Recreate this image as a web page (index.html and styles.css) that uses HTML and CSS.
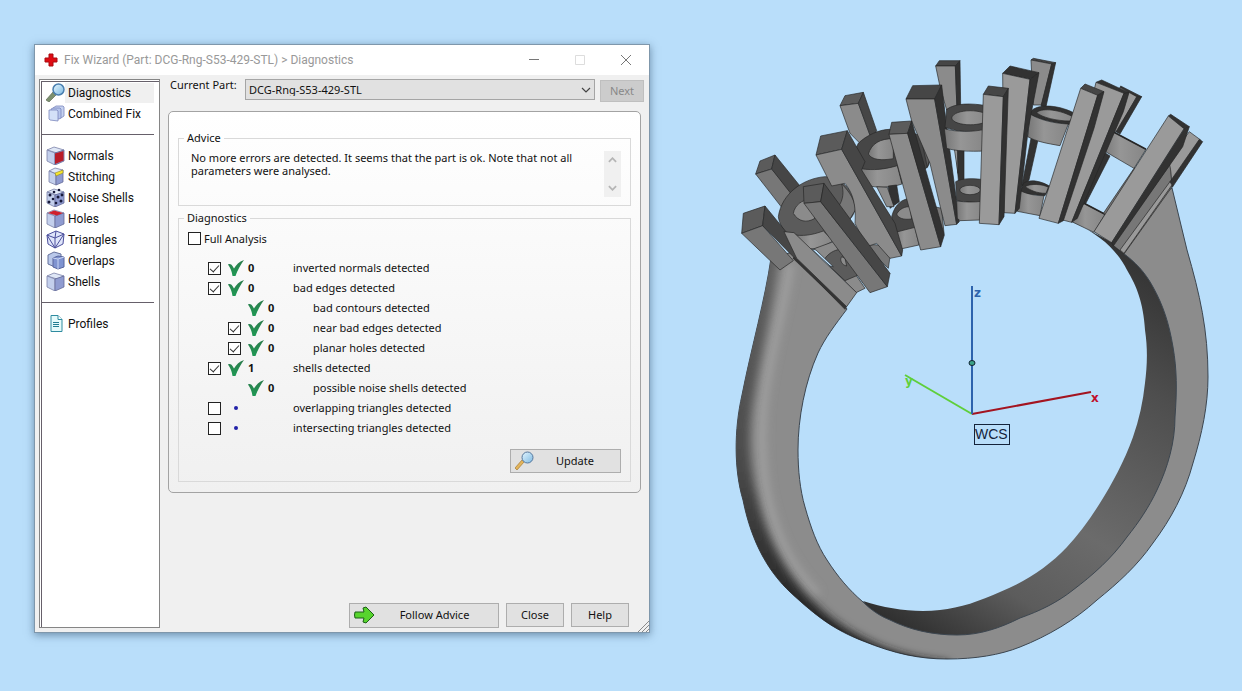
FILE: index.html
```html
<!DOCTYPE html>
<html lang="en">
<head>
<meta charset="utf-8">
<title>Fix Wizard</title>
<link rel="stylesheet" href="styles.css">
</head>
<body>
<svg class="defs" aria-hidden="true">
  <defs>
    <linearGradient id="glass" x1="0" y1="0" x2="1" y2="1"><stop offset="0" stop-color="#e4f6ff"/><stop offset="1" stop-color="#7db9e2"/></linearGradient>
    <linearGradient id="tickG" x1="0" y1="0" x2="0" y2="1"><stop offset="0" stop-color="#2b7a4b"/><stop offset="1" stop-color="#1f9a55"/></linearGradient>
    <symbol id="tick" viewBox="0 0 16 16"><path d="M0 4.500C2 3.500 3.500 4.500 4.500 6L6 8.500C8 5 11 1.500 16 0C12.500 5 9.500 10 7.500 16H4.500C4 12 2.500 8 0 4.500Z" fill="url(#tickG)"/></symbol>
    <symbol id="cube" viewBox="0 0 19 19"><path d="M1 4L8 1L18 4L11 7Z" fill="#dfe7f6" stroke="#7b81a8" stroke-width=".8"/><path d="M1 4L9 7V19L1 15Z" fill="#c3cfec" stroke="#7b81a8" stroke-width=".8"/><path d="M9 7L18 4V15L9 19Z" fill="#8f9bd0" stroke="#656b98" stroke-width=".8"/></symbol>
  </defs>
</svg>
<div class="desktop">
  <section class="window">
    <header class="titlebar">
      <svg class="cross" viewBox="0 0 14 14"><path d="M5 1H9V5H13V9H9V13H5V9H1V5H5Z" fill="#e00b12" stroke="#a90d10"/></svg>
      <h1 class="title">Fix Wizard (Part: DCG-Rng-S53-429-STL) &gt; Diagnostics</h1>
      <div class="caption-buttons">
        <button class="caption" aria-label="Minimize"><svg viewBox="0 0 12 12"><path d="M1 5.500H11" stroke="#777"/></svg></button>
        <button class="caption" aria-label="Maximize" disabled><svg viewBox="0 0 12 12"><path d="M1.500 1.500H10.500V10.500H1.500Z" fill="none" stroke="#ddd"/></svg></button>
        <button class="caption" aria-label="Close window"><svg viewBox="0 0 12 12"><path d="M1 1L11 11M11 1L1 11" stroke="#777"/></svg></button>
      </div>
    </header>
    <div class="window-body">
      <nav class="sidebar">
        <button class="nav-item selected"><svg viewBox="0 0 19 19"><path d="M0 17L7 9L10 12L3 19Z" fill="#7c906f" stroke="#5d6c55" stroke-width=".7"/><circle cx="12.500" cy="6.500" r="5.500" fill="url(#glass)" stroke="#4a7fb0" stroke-width="1.500"/></svg><span>Diagnostics</span></button>
        <button class="nav-item"><svg viewBox="0 0 19 19"><g stroke="#7b87bd" stroke-width=".8"><path d="M7 4L10 2H17L18 3V12L15 14H7Z" fill="#c5d2f0"/><path d="M5 5L7 4H14L15 5V14L13 15H5Z" fill="#b5c5ec"/><path d="M3 6H11L12 7V17L4 16L3 15Z" fill="#d3e1f8"/></g></svg><span>Combined Fix</span></button>
        <hr class="separator">
        <button class="nav-item"><svg viewBox="0 0 19 19"><use href="#cube"/><path d="M9 7.500L17.500 5V14.500L9 18Z" fill="#b91c28"/></svg><span>Normals</span></button>
        <button class="nav-item"><svg viewBox="0 0 19 19"><path d="M3 4L9 1L17 3L11 7Z" fill="#dfe7f6" stroke="#7b81a8" stroke-width=".8"/><path d="M3 4L10 7V18L3 15Z" fill="#c3cfec" stroke="#7b81a8" stroke-width=".8"/><path d="M10 7L17 3V15L10 18Z" fill="#8f9bd0" stroke="#656b98" stroke-width=".8"/><path d="M9 6L17 3V6L10 9Z" fill="#f6e52c" stroke="#8d8430" stroke-width=".6"/></svg><span>Stitching</span></button>
        <button class="nav-item"><svg viewBox="0 0 19 19"><use href="#cube"/><g fill="#17193a"><circle cx="4" cy="7" r="1.500"/><circle cx="7" cy="11" r="1.300"/><circle cx="3" cy="14" r="1.500"/><circle cx="8" cy="4" r="1.300"/><circle cx="13" cy="2" r="1.300"/><circle cx="12" cy="9" r="1.500"/><circle cx="16" cy="7" r="1.400"/><circle cx="15" cy="13" r="1.500"/><circle cx="10" cy="15" r="1.300"/></g></svg><span>Noise Shells</span></button>
        <button class="nav-item"><svg viewBox="0 0 19 19"><use href="#cube"/><path d="M2 4L8 1.500L17 4L11 6.500Z" fill="#d0202c"/></svg><span>Holes</span></button>
        <button class="nav-item"><svg viewBox="0 0 19 19"><path d="M1 5L10 1L18 4L17 14L9 18L2 14Z" fill="#dfe5fa" stroke="#4c4f9c"/><path d="M1 5L9 8L18 4M9 8V18M10 1L9 8M1 5L9 18L18 4" fill="none" stroke="#4c4f9c"/></svg><span>Triangles</span></button>
        <button class="nav-item"><svg viewBox="0 0 19 19"><path d="M2 4L8 1L15 3V13L9 16L2 13Z" fill="#b9c8ea" stroke="#65719c"/><path d="M7 7L12 5L18 6V16L12 18L7 16Z" fill="#7f93d0" stroke="#58659c"/><path d="M12 8V18M7 7L12 8L18 6" fill="none" stroke="#c9d5f4"/></svg><span>Overlaps</span></button>
        <button class="nav-item"><svg viewBox="0 0 19 19"><use href="#cube"/></svg><span>Shells</span></button>
        <hr class="separator">
        <button class="nav-item"><svg viewBox="0 0 19 19"><path d="M5 1.500H12L16 5.500V17.500H5Z" fill="#e6fbfb" stroke="#2f8ba0"/><path d="M12 1.500V5.500H16" fill="#fff" stroke="#2f8ba0"/><path d="M7 8.500H13M7 10.500H13M7 12.500H13" stroke="#227e92"/></svg><span>Profiles</span></button>
      </nav>
      <main class="main">
        <div class="part-row">
          <label class="part-label" for="part">Current Part:</label>
          <span class="select-wrap">
            <select id="part" class="part-select"><option>DCG-Rng-S53-429-STL</option></select>
            <svg class="chevron" viewBox="0 0 10 6"><path d="M1 1L5 5L9 1" fill="none" stroke="#444" stroke-width="1.200"/></svg>
          </span>
          <button class="next" disabled>Next</button>
        </div>
        <div class="panel">
          <fieldset class="group advice">
            <legend>Advice</legend>
            <p class="advice-text">No more errors are detected. It seems that the part is ok. Note that not all parameters were analysed.</p>
            <div class="scroll"><svg viewBox="0 0 10 6"><path d="M1 5L5 1L9 5" fill="none" stroke="#b5b5b5" stroke-width="2"/></svg><svg viewBox="0 0 10 6"><path d="M1 1L5 5L9 1" fill="none" stroke="#b5b5b5" stroke-width="2"/></svg></div>
          </fieldset>
          <fieldset class="group diagnostics">
            <legend>Diagnostics</legend>
            <label class="full"><input type="checkbox" class="check"><span>Full Analysis</span></label>
            <ul class="checks">
              <li class="row"><input id="c1" type="checkbox" class="check" checked><svg class="tick"><use href="#tick"/></svg><b>0</b><label for="c1">inverted normals detected</label></li>
              <li class="row"><input id="c2" type="checkbox" class="check" checked><svg class="tick"><use href="#tick"/></svg><b>0</b><label for="c2">bad edges detected</label></li>
              <li class="row sub"><i></i><svg class="tick"><use href="#tick"/></svg><b>0</b><span>bad contours detected</span></li>
              <li class="row sub"><input id="c4" type="checkbox" class="check" checked><svg class="tick"><use href="#tick"/></svg><b>0</b><label for="c4">near bad edges detected</label></li>
              <li class="row sub"><input id="c5" type="checkbox" class="check" checked><svg class="tick"><use href="#tick"/></svg><b>0</b><label for="c5">planar holes detected</label></li>
              <li class="row"><input id="c6" type="checkbox" class="check" checked><svg class="tick"><use href="#tick"/></svg><b>1</b><label for="c6">shells detected</label></li>
              <li class="row sub"><i></i><svg class="tick"><use href="#tick"/></svg><b>0</b><span>possible noise shells detected</span></li>
              <li class="row"><input id="c8" type="checkbox" class="check"><i class="dot"></i><b></b><label for="c8">overlapping triangles detected</label></li>
              <li class="row"><input id="c9" type="checkbox" class="check"><i class="dot"></i><b></b><label for="c9">intersecting triangles detected</label></li>
            </ul>
            <button class="btn update"><svg viewBox="0 0 19 19"><path d="M0 17L7 9L9 11L2 19Z" fill="#e3b55c" stroke="#a57a30" stroke-width=".7"/><circle cx="12.500" cy="6.500" r="5.500" fill="url(#glass)" stroke="#56779c"/></svg><span>Update</span></button>
          </fieldset>
        </div>
        <footer class="actions">
          <button class="btn follow"><svg viewBox="0 0 21 18"><path d="M1 6H10L9 2L12 1L20 9L12 17L9 16L10 12H1L0.500 9Z" fill="#57d42d" stroke="#1d5f18" stroke-linejoin="round"/></svg><span>Follow Advice</span></button>
          <button class="btn small">Close</button>
          <button class="btn small">Help</button>
        </footer>
      </main>
    </div>
    <svg class="grip" viewBox="0 0 12 12"><path d="M1 12L12 1M5 12L12 5M9 12L12 9" stroke="#8a8a8a"/></svg>
  </section>

  <svg class="scene" viewBox="650 0 592 691" role="img" aria-label="Ring model with coordinate axes">
    <defs>
      <filter id="soft" x="-20%" y="-20%" width="140%" height="140%"><feGaussianBlur stdDeviation="4"/></filter>
      <linearGradient id="inner" gradientUnits="userSpaceOnUse" x1="1130" y1="250" x2="900" y2="630"><stop offset="0" stop-color="#333"/><stop offset=".25" stop-color="#4e4e4e"/><stop offset=".6" stop-color="#6b6b6b"/><stop offset=".8" stop-color="#5c5c5c"/><stop offset="1" stop-color="#2e2e2e"/></linearGradient>
      <linearGradient id="edge" gradientUnits="userSpaceOnUse" x1="0" y1="260" x2="0" y2="650"><stop offset="0" stop-color="#606060"/><stop offset=".5" stop-color="#4c4c4c"/><stop offset="1" stop-color="#1c1c1c"/></linearGradient>
      <linearGradient id="wall" x1="0" y1="0" x2="1" y2="0"><stop offset="0" stop-color="#777"/><stop offset=".4" stop-color="#969696"/><stop offset="1" stop-color="#868686"/></linearGradient>
      <clipPath id="bandClip"><path d="M771 258C765 300 752 345 742 395C734 430 734 470 743 500C752 545 770 573 790 592C818 618 835 630 863 641C895 654 920 659 947 659C975 659 1000 655 1020 647L957 635C933 635 910 630 890 620C880 616 871 610 863 602C849 590 838 577 827 560C817 545 811 528 805 507C800 490 798 470 798 450C798 418 805 382 818 353C825 338 835 325 847 309L800 250Z"/></clipPath>
    </defs>
    <path d="M1075 223C1100 235 1117 250 1127 270C1137 287 1143 302 1145 330C1148 350 1147 367 1145 383C1143 402 1139 420 1133 437C1124 462 1112 484 1100 503C1090 519 1079 534 1067 547C1048 567 1025 582 1000 592C980 601 960 608 940 610C915 613 888 609 863 601C871 612 880 618 890 622C910 633 933 638 957 638C980 638 1000 632 1022 622C1042 614 1060 605 1075 593C1095 578 1114 561 1129 540C1141 525 1152 510 1160 493C1171 470 1178 445 1178 418C1180 390 1180 370 1176 347C1172 323 1166 305 1156 287C1145 265 1137 258 1123 248Z" fill="url(#inner)"/>
    <path d="M771 258C765 300 752 345 742 395C734 430 734 470 743 500C752 545 770 573 790 592C818 618 835 630 863 641C895 654 920 659 947 659C975 659 1000 655 1020 647C1048 636 1075 620 1097 600C1118 583 1137 566 1153 543C1171 519 1185 493 1193 463C1202 434 1208 405 1208 377C1208 330 1200 295 1187 250L1172 188L1150 200L1123 253C1135 262 1145 272 1153 287C1163 305 1169 323 1173 347C1177 370 1177 390 1175 417C1175 442 1168 467 1157 490C1149 507 1139 522 1127 537C1112 558 1093 575 1073 590C1058 602 1040 611 1020 618C1000 628 980 635 957 635C933 635 910 630 890 620C880 616 871 610 863 602C849 590 838 577 827 560C817 545 811 528 805 507C800 490 798 470 798 450C798 418 805 382 818 353C825 338 835 325 847 309L800 250Z" fill="#8c8c8c" stroke="#3c4650"/>
    <g clip-path="url(#bandClip)">
      <path d="M790 264C784 305 772 345 766 385C760 420 761 465 767 497C777 545 795 572 817 595" fill="none" stroke="#a0a0a0" stroke-width="8" filter="url(#soft)"/>
      <path d="M781 240C775 300 762 345 754 395C747 430 749 465 757 497C768 545 790 580 818 606C835 623 860 638 885 648C910 657 930 660 950 662L940 680L860 665L760 600L715 480L725 380L755 240Z" fill="url(#edge)" filter="url(#soft)"/>
    </g>
    <g class="model" transform="translate(730 50) scale(.333333)">
      <path class="p3" d="M90 333L135 315L125 357L77 372Z"/><path class="p4" d="M77 372L125 357L195 440L155 472Z"/><path class="p2" d="M135 315L210 408L190 440L125 357Z"/>
      <path class="p3" d="M345 137L400 127L385 160L330 167Z"/><path class="p5" d="M330 167L385 160L425 270L400 290L360 250Z"/><path class="p2" d="M400 127L440 242L425 268L385 160Z"/>
      <path class="p2" d="M628 32H690L676 48H617Z"/><path class="p5" d="M617 48H676L681 180H650L630 110Z"/><path class="p1" d="M690 32L692 165L681 177L676 48Z"/>
      <path class="p1" d="M676 290H702V400H686Z"/><path class="p6" d="M672 290L682 300L684 370Z"/>
      <path class="p3" d="M145 500C155 430 220 385 285 380C330 380 375 420 376 475C370 500 360 510 350 512L240 597C190 580 150 540 145 500Z"/>
      <path class="p5" d="M190 490C195 465 215 450 240 448L255 505C230 520 205 515 190 490Z"/>
      <path class="wall" d="M195 555C230 560 260 550 280 543L310 572C285 590 260 597 240 597Z"/>
      <path class="p4" d="M335 402C360 425 376 455 376 480L355 515L325 470C340 450 342 425 335 402Z"/>
      <path class="p5" d="M250 597L310 575L405 715L378 728Z"/><path class="p3" d="M285 625C300 605 320 598 335 598L385 675L345 692L300 650Z"/><path class="p5" d="M335 620C328 630 335 645 350 648L345 625Z"/>
      <path class="gap" d="M245 597L258 600L310 650L300 648Z"/>
      <path class="p4" d="M410 590C440 575 470 590 480 620L475 655Z"/>
      <path class="p3" d="M40 490L105 468L98 527L35 550Z"/><path class="p4" d="M35 550L98 527L190 632L150 660Z"/><path class="p2" d="M105 468L350 768L345 778L98 527Z"/>
      <path class="p5" d="M162 545L192 548L380 728L350 770L200 625Z"/>
      <path d="M190 622L347 773" fill="none" stroke="#333" stroke-width="7"/>
      <path class="p2" d="M385 280C410 255 450 238 480 238L588 258C605 300 605 330 592 352L520 400L400 360L370 310Z"/>
      <path class="wall" d="M415 312C425 280 450 266 490 266V326C455 332 425 330 415 312Z"/>
      <path class="p3" d="M572 258L588 258L602 320L592 352Z"/>
      <path class="wall" d="M393 356C430 362 465 358 502 347L516 402C480 414 440 414 410 406Z"/>
      <path class="p1" d="M475 408L500 405L508 455L480 475Z"/><path class="p5" d="M440 410L472 412L492 470L470 470Z"/>
      <path class="p2" d="M485 500C495 460 520 445 545 445L560 535L500 548Z"/><path class="p5" d="M500 492C510 475 525 470 540 470L545 507C520 510 505 505 500 492Z"/><path class="wall" d="M492 548L555 532L567 585L512 597Z"/>
      <path class="p3" d="M272 258L352 242L335 298L258 315Z"/><path class="p5" d="M258 315L335 298L515 618L480 625L440 580L410 590L375 520C380 450 360 420 345 400L305 408Z"/><path class="p2" d="M352 242L405 335L395 360L495 520L518 600L515 618L335 298Z"/>
      <path class="p4" d="M612 470L635 475L642 550L632 560Z"/>
      <path class="p2" d="M548 107L635 105L614 147L528 147Z"/><path class="p5" d="M528 147H614L680 523L645 527L632 475L600 340L545 213Z"/><path class="p1" d="M635 105L650 230L688 515L680 523L614 147Z"/>
      <path class="p3" d="M220 410L282 400L272 455L222 460Z"/><path class="p4" d="M222 460L272 455L472 710L420 728Z"/><path class="p2" d="M282 400L480 670L472 710L272 455Z"/>
      <path class="p3" d="M485 217L545 213L533 250L477 253Z"/><path class="p5" d="M477 253L533 250L632 590L572 600Z"/><path class="p1" d="M545 213L643 555L632 590L533 250Z"/>
    </g>
    <g class="model" transform="translate(960 50) scale(.333333)">
      <path class="p2" d="M-40 178C-15 160 30 158 85 168V240C40 250 -15 245 -45 232Z"/><path class="wall" d="M-25 204C-20 175 80 175 90 204C80 231 -20 231 -25 204Z"/><path class="wall" d="M-47 236C-10 247 40 246 75 238L72 303C30 305 -15 303 -40 295Z"/>
      <path class="p2" d="M-13 395C10 383 40 385 80 390V455C30 458 -10 455 -10 450Z"/><ellipse class="wall" cx="30" cy="420" rx="31" ry="14"/><path class="wall" d="M-10 453C20 457 40 457 66 454L60 510L0 512L-8 505Z"/>
      <path class="p2" d="M220 25L287 38L275 42L213 30Z"/><path class="p5" d="M213 30L275 42L245 165L220 165Z"/><path class="p1" d="M287 38L258 170L243 168L275 42Z"/>
      <path class="p1" d="M215 255L235 265L207 390L185 410Z"/><path class="p2" d="M145 195H155L148 275L135 280Z"/>
      <path class="p1" d="M208 192C220 160 290 162 340 188L332 224C290 220 240 210 208 192Z"/><path class="wall" d="M230 188C240 175 290 175 338 200L330 213C290 213 245 202 230 188Z"/><path class="wall" d="M210 192C240 210 280 220 325 222L300 287C260 280 230 275 203 260Z"/>
      <path class="p1" d="M190 400C210 385 250 395 270 410L255 437L180 430Z"/><path class="wall" d="M195 410C210 400 250 402 265 412L258 430C230 430 210 420 195 410Z"/><path class="wall" d="M180 422C200 432 230 438 252 437L240 497L172 484Z"/>
      <path class="p1" d="M150 48L237 68L210 88L128 70Z"/><path class="p6" d="M128 70L210 88L165 490L132 488Z"/><path class="p1" d="M237 68L205 235L178 475L165 490L210 88Z"/>
      <path class="p2" d="M85 108L145 115L130 140L70 133Z"/><path class="p6" d="M70 133L130 140L117 524L58 520Z"/><path class="p1" d="M145 115L132 500L117 524L130 140Z"/>
      <path class="p1" d="M482 108L545 140L530 142L480 115Z"/><path class="p6" d="M480 112L530 140L472 245L450 240Z"/><path class="p1" d="M545 140L480 252L468 245L530 142Z"/>
      <path class="p1" d="M430 305L450 318L375 465L355 460Z"/>
      <path class="wall" d="M455 243L558 298L522 355L428 300Z"/><path class="wall" d="M372 460L435 493L402 547L335 515Z"/><path d="M372 460L435 493M455 243L558 298" stroke-width="5"/>
      <path class="p4" d="M522 355L530 355L440 495L430 490Z"/>
      <path class="p1" d="M425 90L507 128L492 132L408 97Z"/><path class="p6" d="M408 97L492 130L335 517L308 510Z"/><path class="p1" d="M507 128L490 185L352 505L335 517L492 130Z"/>
      <path class="p2" d="M375 102L432 125L413 136L362 115Z"/><path class="p6" d="M362 115L413 136L295 520L237 505Z"/><path class="p1" d="M432 125L402 235L310 512L295 520L413 136Z"/>
      <path class="p4" d="M668 290L632 325L635 412L492 612L458 585Z"/><path class="p6" d="M688 245L722 270L635 395C633 355 628 340 625 330Z"/><path class="p1" d="M728 275L637 412L630 395L718 268Z"/><path class="p6" d="M630 395L636 405L492 610L480 600Z"/>
      <path class="p1" d="M632 193L688 230L672 238L625 198Z"/><path class="p6" d="M625 198L672 236L455 578L402 545Z"/><path class="p1" d="M688 230L668 290L460 588L455 578L672 238Z"/>
    </g>
    <g class="axes" fill="none" stroke-width="2">
      <path d="M972 414L1091 392" stroke="#a31420"/><path d="M972 414L905 375" stroke="#5fcf3a"/><path d="M972 286V414" stroke="#2d63ad"/>
      <ellipse cx="972" cy="363" rx="3" ry="2.500" fill="#3ca287" stroke="#123" stroke-width="1"/>
      <rect x="974.500" y="424.500" width="35" height="20" stroke="#14233a" stroke-width="1"/>
    </g>
    <g class="axis-text"><text x="974" y="297" fill="#2d63ad">z</text><text x="905" y="385" fill="#5fcf3a">y</text><text x="1091" y="402" fill="#c00f2b">x</text><text class="wcs" x="975" y="439">WCS</text></g>
  </svg>
</div>
</body>
</html>
```
FILE: styles.css
```css
* { box-sizing: border-box; }
body { margin: 0; background: #b9defa; color: #111; font: 11px/13px "Noto Sans", "Open Sans", sans-serif; }
button, select, input { font: inherit; color: inherit; margin: 0; }
.defs { position: absolute; width: 0; height: 0; }
.desktop { min-height: 100vh; display: grid; grid-template-columns: minmax(0, 650fr) minmax(0, 592fr); }
.window { position: relative; display: flex; flex-direction: column; margin: 44px 0 58px 34px; background: #f0f0f0; border: 1px solid #7f97ab; box-shadow: 0 2px 8px rgba(30, 60, 90, .5); }
.titlebar { display: flex; align-items: center; height: 30px; padding-left: 9px; background: #fff; }
.cross { width: 14px; height: 14px; }
.title { flex: 1; margin: 0 0 0 6px; color: #999; font-family: Roboto, "Noto Sans", sans-serif; font-size: 12px; font-weight: 400; line-height: 16px; white-space: nowrap; }
.caption-buttons { display: flex; }
.caption { display: grid; place-items: center; width: 46px; height: 29px; padding: 0; border: 0; background: none; }
.caption svg { width: 12px; height: 12px; }
.window-body { flex: 1; display: flex; gap: 8px; padding: 4px; }
.sidebar { flex: 0 0 121px; padding: 2px 5px 1px 1px; background: #fff; border: 1px solid #858585; box-shadow: inset 1px 1px #fff, inset 2px 2px #66606a; }
.nav-item { display: flex; align-items: center; width: 100%; height: 21px; padding: 0 0 0 5px; border: 0; background: none; font-family: Roboto, "Noto Sans", sans-serif; font-size: 12px; line-height: 20px; text-align: left; white-space: nowrap; }
.nav-item svg { flex: none; width: 19px; height: 19px; }
.nav-item span { flex: 1; padding-left: 3px; }
.nav-item.selected span { background: #f0f0f0; }
.separator { height: 1px; margin: 10px 0; border: 0; background: #66606a; }
.main { flex: 1; min-width: 0; display: flex; flex-direction: column; }
.part-row { display: flex; padding-left: 2px; }
.part-label { flex: 0 0 75px; line-height: 12px; }
.select-wrap { flex: 1; position: relative; display: flex; }
.part-select { appearance: none; flex: 1; height: 21px; padding: 0 3px; background: #e1e1e1; border: 1px solid #a5a5a5; border-radius: 0; }
.chevron { position: absolute; right: 4px; top: 8px; width: 10px; height: 6px; pointer-events: none; }
.next { width: 44px; height: 22px; margin: 1px 1px 0 5px; padding: 0 0 2px; border: 1px solid #bfbfbf; background: #ccc; color: #888; }
.panel { margin: 9px 4px 0 0; padding: 20px 9px 10px; border: 1px solid #a3a3a3; border-radius: 5px; background: linear-gradient(#fff, #f0f0f0); }
.group { margin: 0; border: 1px solid #d9d9d9; padding: 0; min-width: 0; }
.group legend { padding: 0 3px; line-height: 12px; }
.advice { display: flex; justify-content: space-between; height: 74px; padding: 7px 9px 8px 12px; }
.advice legend { margin-left: -7px; }
.advice-text { flex: 0 1 390px; margin: 0; }
.scroll { width: 17px; height: 46px; padding: 6px 0; display: flex; flex-direction: column; align-items: center; justify-content: space-between; background: #f0f0f0; }
.scroll svg { width: 9px; height: 6px; }
.diagnostics { margin-top: 6px; padding: 8px 9px 8px; }
.diagnostics legend { margin-left: -4px; }
.full { display: flex; align-items: center; gap: 3px; }
.check { appearance: none; flex: none; width: 13px; height: 13px; border: 1px solid #222; background: #fff; }
.check:checked::after { content: ""; display: block; width: 8px; height: 4px; margin: 2px 0 0 1px; border: solid #333; border-width: 0 0 1px 1px; transform: rotate(-48deg); }
.checks { margin: 13px 0 11px 20px; padding: 0; list-style: none; }
.row { display: grid; grid-template-columns: 20px 20px 45px 1fr; align-items: center; height: 20px; }
.row b, .row label, .row span { padding-bottom: 2px; }
.sub { margin-left: 20px; }
.tick { width: 16px; height: 16px; }
.dot { width: 4px; height: 4px; margin-left: 6px; border-radius: 50%; background: #2222a8; }
.btn { display: flex; align-items: center; height: 24px; padding: 0 4px 2px; border: 1px solid #adadad; background: #e1e1e1; }
.btn span { flex: 1; text-align: center; }
.update { width: 111px; margin-left: auto; }
.update svg { width: 19px; height: 19px; }
.actions { display: flex; gap: 7px; justify-content: flex-end; margin-top: auto; padding-right: 16px; }
.follow { width: 150px; height: 25px; }
.follow svg { width: 21px; height: 18px; }
.small { width: 58px; justify-content: center; }
.grip { position: absolute; right: 0; bottom: 0; width: 12px; height: 12px; }
.scene { width: 100%; height: 100vh; }
.model { stroke: #262626; stroke-width: 2; stroke-linejoin: round; }
.p1 { fill: #323232; }
.p2 { fill: #464646; }
.p3 { fill: #5b5b5b; }
.p4 { fill: #777; }
.p5 { fill: #8b8b8b; }
.p6 { fill: #9a9a9a; }
.wall { fill: url(#wall); }
.gap { fill: #b9defa; }
.axis-text { font: bold 12px "DejaVu Sans", sans-serif; }
.wcs { font: 14px "Liberation Sans", sans-serif; fill: #14233a; }
```
